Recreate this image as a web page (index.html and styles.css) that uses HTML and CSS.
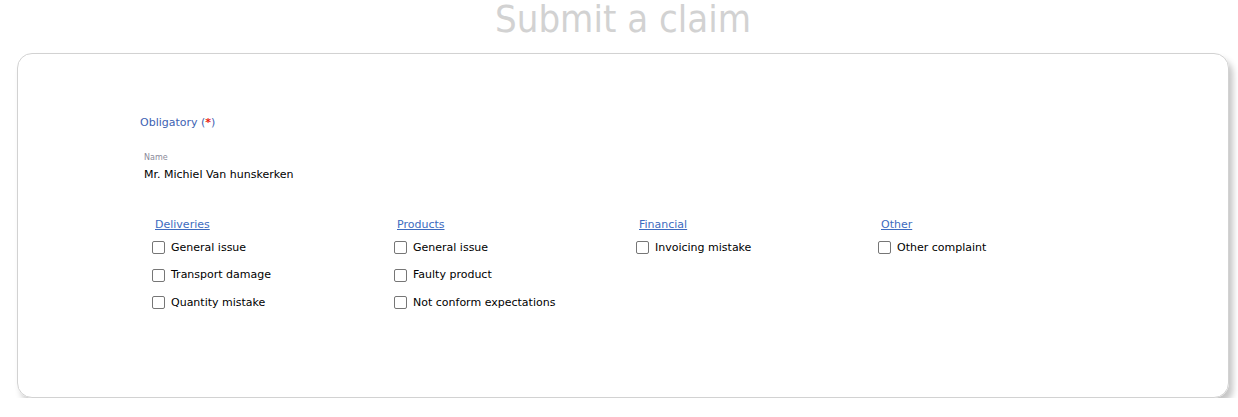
FILE: index.html
```html
<!DOCTYPE html>
<html>
<head>
<meta charset="utf-8">
<link rel="stylesheet" href="styles.css">
</head>
<body>
<div class="page">
  <h1 class="title">Submit a claim</h1>
  <div class="card">
    <div class="obligatory">Obligatory (<span class="star">*</span>)</div>
    <div class="field">
      <div class="field-label">Name</div>
      <div class="field-value">Mr. Michiel Van hunskerken</div>
    </div>
    <div class="groups">
      <div class="group">
        <a class="group-title" href="#">Deliveries</a>
        <label class="opt"><input type="checkbox"><span>General issue</span></label>
        <label class="opt"><input type="checkbox"><span>Transport damage</span></label>
        <label class="opt"><input type="checkbox"><span>Quantity mistake</span></label>
      </div>
      <div class="group">
        <a class="group-title" href="#">Products</a>
        <label class="opt"><input type="checkbox"><span>General issue</span></label>
        <label class="opt"><input type="checkbox"><span>Faulty product</span></label>
        <label class="opt"><input type="checkbox"><span>Not conform expectations</span></label>
      </div>
      <div class="group">
        <a class="group-title" href="#">Financial</a>
        <label class="opt"><input type="checkbox"><span>Invoicing mistake</span></label>
      </div>
      <div class="group">
        <a class="group-title" href="#">Other</a>
        <label class="opt"><input type="checkbox"><span>Other complaint</span></label>
      </div>
    </div>
  </div>
</div>
</body>
</html>
```
FILE: styles.css
```css
html, body {
  margin: 0;
  padding: 0;
  background: #fff;
}
body {
  font-family: "DejaVu Sans", sans-serif;
  font-size: 11px;
  color: #000;
}
.page {
  padding: 0 9px 0 17px;
}
.title {
  margin: 0;
  padding-top: 2px;
  text-align: center;
  font-family: "DejaVu Sans Condensed", "DejaVu Sans", sans-serif;
  font-weight: normal;
  font-size: 38px;
  line-height: 34px;
  color: #d2d2d2;
}
.card {
  margin-top: 17px;
  height: 281px;
  border: 1px solid #d2d2d2;
  border-radius: 15px;
  box-shadow: 4px 6px 6px #c6c6c6;
  padding: 62px 0 0 122px;
}
.obligatory {
  line-height: 14px;
  color: #3d62b3;
}
.star {
  color: #e8200f;
  font-weight: bold;
}
.field {
  margin: 23px 0 0 4px;
}
.field-label {
  font-size: 8px;
  line-height: 10px;
  color: #8a8a9a;
}
.field-value {
  margin-top: 5px;
  line-height: 14px;
}
.groups {
  display: flex;
  margin: 36px 0 0 12px;
}
.group {
  width: 242px;
  display: flex;
  flex-direction: column;
}
.group-title {
  align-self: flex-start;
  margin-left: 3px;
  line-height: 14px;
  color: #3d6bc0;
  text-decoration: underline;
}
.opt {
  display: flex;
  align-items: center;
  height: 27.5px;
  line-height: 14px;
}
.opt:first-of-type {
  margin-top: 2px;
}
.opt input {
  -webkit-appearance: none;
  appearance: none;
  width: 13px;
  height: 13px;
  margin: 0 6px 0 0;
  border: 1px solid #767676;
  border-radius: 2px;
  background: #fff;
  box-sizing: border-box;
}
```
